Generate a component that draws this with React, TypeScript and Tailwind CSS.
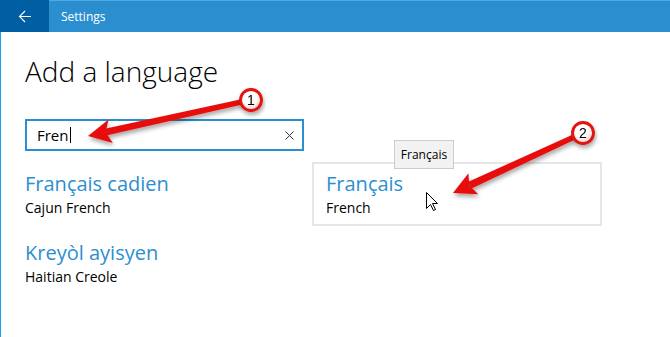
import React from "react";

const font = { fontFamily: '"Open Sans", "Noto Sans", sans-serif' };

function BackArrow() {
  return (
    <svg width="14" height="13" viewBox="0 0 14 13" fill="none" stroke="white" strokeWidth="1.1">
      <path d="M13 6.5H1.5M7 1L1.5 6.5L7 12" />
    </svg>
  );
}

function LanguageItem({ name, english }: { name: string; english: string }) {
  return (
    <div>
      <div className="text-[20px] leading-[24px] text-[#2b8fcf]">{name}</div>
      <div className="mt-[3px] text-[14px] leading-[18px] text-black">{english}</div>
    </div>
  );
}

function Callout({ cx, cy, label }: { cx: number; cy: number; label: string }) {
  return (
    <g filter="url(#shadow)">
      <circle cx={cx} cy={cy} r="10.5" fill="url(#bubble)" stroke="#e3120b" strokeWidth="2.8" />
      <text
        x={cx}
        y={cy + 5}
        textAnchor="middle"
        fontSize="14"
        fontFamily="Liberation Sans, Arial, sans-serif"
        fill="#000"
      >
        {label}
      </text>
    </g>
  );
}

function Annotations() {
  return (
    <svg className="pointer-events-none absolute left-0 top-0" width="670" height="337" viewBox="0 0 670 337">
      <defs>
        <filter id="shadow" x="-20%" y="-20%" width="140%" height="160%">
          <feDropShadow dx="1" dy="3" stdDeviation="2" floodColor="#000" floodOpacity="0.35" />
        </filter>
        <radialGradient id="bubble" cx="0.45" cy="0.4" r="0.6">
          <stop offset="0.5" stopColor="#ffffff" />
          <stop offset="1" stopColor="#f3c9c9" />
        </radialGradient>
      </defs>
      {/* arrow 1 */}
      <g filter="url(#shadow)">
        <polygon points="242.4,99.1 243.6,104.3 106.3,135.5 104.9,128.7" fill="#e8100b" />
        <polygon points="88,136 108.6,119.5 105.6,132.1 112.8,143" fill="#e8100b" />
      </g>
      <Callout cx={251} cy={100} label="1" />
      {/* arrow 2 */}
      <g filter="url(#shadow)">
        <polygon points="573,134.5 575.2,139.5 471,188.7 467.8,182" fill="#e8100b" />
        <polygon points="453,193 468.4,173.3 469.3,185.5 478.3,194.3" fill="#e8100b" />
      </g>
      <Callout cx={583} cy={133} label="2" />
      {/* mouse pointer */}
      <path
        d="M426.5 192.5V208.5L430.5 204.5L433.5 210.5L435.5 209.5L432.5 203.5H437.5Z"
        fill="white"
        stroke="black"
        strokeWidth="1"
        strokeLinejoin="round"
      />
    </svg>
  );
}

export default function App() {
  return (
    <div className="relative h-[337px] w-[670px] overflow-hidden bg-white" style={font}>
      <header className="flex h-[32px]">
        <div className="flex w-[49px] items-center justify-center bg-[#005fa3]">
          <BackArrow />
        </div>
        <div className="flex flex-1 items-center border-t border-[#52a9e2] bg-[#2b8fcf] pl-[12px] text-[12px] text-white">
          Settings
        </div>
      </header>

      <main className="h-[305px] border-l border-[#1a9cf0] pl-[24px]">
        <h1 className="pt-[21px] text-[28px] font-light leading-[36px] text-black">Add a language</h1>

        <div className="mt-[30px] flex h-[32px] w-[279px] items-center border-2 border-[#2b8fcf] pl-[10px] pr-[8px]">
          <span className="text-[15px] text-black">Fren</span>
          <span className="ml-[1px] h-[16px] w-[1px] bg-black" />
          <svg className="ml-auto" width="9" height="9" viewBox="0 0 9 9" stroke="#333" strokeWidth="1">
            <path d="M0.5 0.5L8.5 8.5M8.5 0.5L0.5 8.5" />
          </svg>
        </div>

        <div className="mt-[11px] grid grid-cols-[287px_290px]">
          <div className="flex flex-col gap-[24px] pt-[10px]">
            <LanguageItem name="Français cadien" english="Cajun French" />
            <LanguageItem name="Kreyòl ayisyen" english="Haitian Creole" />
          </div>
          <div className="relative h-[64px] border-2 border-[#e6e6e6] pl-[12px] pt-[8px]">
            <LanguageItem name="Français" english="French" />
            <div className="absolute left-[80px] top-[-24px] flex h-[29px] w-[60px] items-center justify-center border border-[#cccccc] bg-[#f2f2f2] text-[12px] text-black">
              Français
            </div>
          </div>
        </div>
      </main>

      <Annotations />
    </div>
  );
}
